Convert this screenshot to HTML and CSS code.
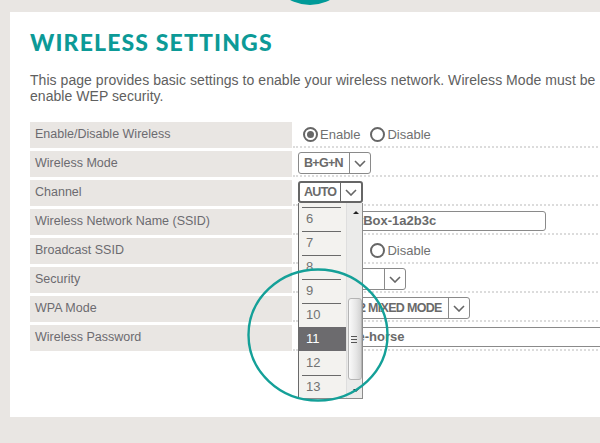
FILE: index.html
```html
<!DOCTYPE html>
<html lang="en">
<head>
<meta charset="utf-8">
<title>Wireless Settings</title>
<link rel="stylesheet" href="styles.css">
</head>
<body>
<div class="page">
  <div class="logo-dot"></div>
  <main class="panel">
    <h1 class="title">WIRELESS SETTINGS</h1>
    <p class="intro">This page provides basic settings to enable your wireless network. Wireless Mode must be enable WEP security.</p>
    <div class="form">
      <div class="row">
        <div class="label">Enable/Disable Wireless</div>
        <div class="value">
          <span class="radio"><span class="dot checked"></span>Enable</span>
          <span class="radio"><span class="dot"></span>Disable</span>
        </div>
      </div>
      <div class="row">
        <div class="label">Wireless Mode</div>
        <div class="value">
          <div class="select w-mode">
            <span class="sel-text">B+G+N</span>
            <span class="sel-arrow"><svg width="12" height="7" viewBox="0 0 12 7"><path d="M1 1l5 5 5-5" fill="none" stroke="#666" stroke-width="1.6"/></svg></span>
          </div>
        </div>
      </div>
      <div class="row">
        <div class="label">Channel</div>
        <div class="value">
          <div class="select w-channel focused">
            <span class="sel-text">AUTO</span>
            <span class="sel-arrow"><svg width="12" height="7" viewBox="0 0 12 7"><path d="M1 1l5 5 5-5" fill="none" stroke="#666" stroke-width="1.6"/></svg></span>
            <div class="listbox">
              <ul class="options">
                <li class="opt">6</li>
                <li class="opt">7</li>
                <li class="opt">8</li>
                <li class="opt">9</li>
                <li class="opt">10</li>
                <li class="opt selected">11</li>
                <li class="opt">12</li>
                <li class="opt">13</li>
              </ul>
              <div class="scrollbar">
                <span class="sb-up"></span>
                <span class="sb-thumb"><span class="grip"></span></span>
                <span class="sb-down"></span>
              </div>
            </div>
          </div>
        </div>
      </div>
      <div class="row">
        <div class="label">Wireless Network Name (SSID)</div>
        <div class="value">
          <div class="input w-ssid">EE BrightBox-1a2b3c</div>
        </div>
      </div>
      <div class="row">
        <div class="label">Broadcast SSID</div>
        <div class="value">
          <span class="radio"><span class="dot checked"></span>Enable</span>
          <span class="radio"><span class="dot"></span>Disable</span>
        </div>
      </div>
      <div class="row">
        <div class="label">Security</div>
        <div class="value">
          <div class="select w-security">
            <span class="sel-text">WPA-PSK</span>
            <span class="sel-arrow"><svg width="12" height="7" viewBox="0 0 12 7"><path d="M1 1l5 5 5-5" fill="none" stroke="#666" stroke-width="1.6"/></svg></span>
          </div>
        </div>
      </div>
      <div class="row">
        <div class="label">WPA Mode</div>
        <div class="value">
          <div class="select w-wpa">
            <span class="sel-text">WPA/WPA2 MIXED MODE</span>
            <span class="sel-arrow"><svg width="12" height="7" viewBox="0 0 12 7"><path d="M1 1l5 5 5-5" fill="none" stroke="#666" stroke-width="1.6"/></svg></span>
          </div>
        </div>
      </div>
      <div class="row">
        <div class="label">Wireless Password</div>
        <div class="value">
          <div class="input w-pass">greywhite-horse</div>
        </div>
      </div>
    </div>
  </main>
  <svg class="magnifier" width="146" height="138" viewBox="0 0 146 138">
    <ellipse cx="73" cy="69" rx="69.5" ry="65.5" fill="none" stroke="#14a098" stroke-width="2.4"/>
  </svg>
</div>
</body>
</html>
```

FILE: styles.css
```css
html, body {
  margin: 0;
  padding: 0;
  overflow: hidden;
}

body {
  background: #e9e6e3;
  font-family: "Liberation Sans", Arial, sans-serif;
}

.page {
  position: relative;
  width: 600px;
  height: 443px;
  overflow: hidden;
  padding: 12px 0 0 10px;
  box-sizing: border-box;
}

.logo-dot {
  position: absolute;
  left: 268px;
  top: -79px;
  width: 84px;
  height: 84px;
  border-radius: 50%;
  background: #009a98;
}

.panel {
  display: block;
  width: 720px;
  height: 405px;
  background: #fff;
  padding: 17px 0 0 20px;
  box-sizing: border-box;
}

.title {
  margin: 0;
  font-family: "Lato", sans-serif;
  font-weight: 900;
  font-size: 23px;
  line-height: 27px;
  color: #0c9a97;
  letter-spacing: 1.15px;
}

.intro {
  width: 590px;
  margin: 16px 0 0;
  font-size: 14px;
  line-height: 16px;
  letter-spacing: 0.05px;
  color: #606060;
}

.form {
  margin: 18px 0 0;
}

.row {
  display: flex;
  height: 26px;
  margin-bottom: 3px;
}

.label {
  width: 262px;
  flex: none;
  background: #e9e6e3;
  padding-left: 5px;
  box-sizing: border-box;
  font-size: 12.5px;
  line-height: 25px;
  color: #6c6b70;
}

.value {
  flex: 1;
  margin-left: 1px;
  padding: 0 0 0 5px;
  display: flex;
  align-items: center;
  border-bottom: 2px dotted #dcdcdc;
  box-sizing: border-box;
}

.radio {
  display: inline-flex;
  align-items: center;
  margin-left: 5px;
  font-size: 13px;
  color: #707070;
}

.radio + .radio {
  margin-left: 10px;
}

.dot {
  width: 15px;
  height: 15px;
  border: 2px solid #666;
  border-radius: 50%;
  box-sizing: border-box;
  margin-right: 2px;
  display: inline-flex;
  align-items: center;
  justify-content: center;
}

.dot.checked::after {
  content: "";
  width: 7px;
  height: 7px;
  border-radius: 50%;
  background: #666;
}

.select {
  position: relative;
  display: flex;
  height: 22px;
  border: 1px solid #8a8a8a;
  border-radius: 3px;
  box-sizing: border-box;
  background: #fff;
}

.select.focused {
  border: 2px solid #666;
}

.sel-text {
  flex: 1;
  padding-left: 5px;
  font-size: 12.5px;
  font-weight: bold;
  letter-spacing: -0.7px;
  line-height: 20px;
  color: #6a6a6a;
  white-space: nowrap;
  overflow: hidden;
}

.focused .sel-text {
  padding-left: 4px;
  line-height: 18px;
}

.sel-arrow {
  width: 20px;
  flex: none;
  border-left: 1px solid #8a8a8a;
  display: flex;
  align-items: center;
  justify-content: center;
}

.focused .sel-arrow {
  border-left-color: #666;
}

.w-mode { width: 73px; }
.w-channel { width: 65px; }
.w-security { width: 108px; }
.w-wpa { width: 172px; }

.input {
  height: 20px;
  border: 1px solid #8a8a8a;
  border-radius: 3px;
  box-sizing: border-box;
  padding-left: 5px;
  font-size: 13px;
  font-weight: bold;
  line-height: 18px;
  color: #6a6a6a;
  white-space: nowrap;
}

.w-ssid { width: 248px; }
.w-pass { width: 400px; }

.listbox {
  position: absolute;
  left: -2px;
  top: calc(100% + 2px);
  width: 65px;
  height: 196px;
  box-sizing: border-box;
  border: 1px solid #8c8c8c;
  border-left-color: #6a6a6a;
  border-top: none;
  background: #f3f2ef;
  display: flex;
  overflow: hidden;
  z-index: 2;
}

.options {
  list-style: none;
  margin: 0;
  padding: 4px 0 0;
  width: 47px;
  flex: none;
}

.opt {
  position: relative;
  height: 24px;
  line-height: 24px;
  padding-left: 7px;
  font-size: 13px;
  color: #727272;
}

.opt::before {
  content: "";
  position: absolute;
  left: 3px;
  right: 5px;
  top: 0;
  height: 1px;
  background: #6a6a6a;
}

.opt.selected {
  background: #6c6b6e;
  color: #fff;
}

.opt.selected::before,
.opt.selected + .opt::before {
  display: none;
}

.scrollbar {
  position: relative;
  flex: 1;
  background: #ebebea;
  border-left: 1px solid #dedede;
}

.sb-up,
.sb-down {
  position: absolute;
  left: 6px;
  width: 0;
  height: 0;
  border-left: 3px solid transparent;
  border-right: 3px solid transparent;
}

.sb-up {
  top: 8px;
  border-bottom: 3px solid #222;
}

.sb-down {
  bottom: 6px;
  border-top: 3px solid #222;
}

.sb-thumb {
  position: absolute;
  left: 1px;
  right: 0;
  top: 95px;
  height: 82px;
  border: 1px solid #b4b4b4;
  border-radius: 3px;
  box-sizing: border-box;
  background: linear-gradient(to right, #fafafa, #e6e6e6 60%, #d2d2d2);
  display: flex;
  align-items: center;
  justify-content: center;
}

.grip {
  width: 6px;
  height: 5px;
  border-top: 1px solid #555;
  border-bottom: 1px solid #555;
  position: relative;
  margin-right: 2px;
}

.grip::after {
  content: "";
  position: absolute;
  left: 0;
  right: 0;
  top: 2px;
  height: 1px;
  background: #555;
}

.magnifier {
  position: absolute;
  left: 245px;
  top: 266px;
  z-index: 5;
  pointer-events: none;
}
```
